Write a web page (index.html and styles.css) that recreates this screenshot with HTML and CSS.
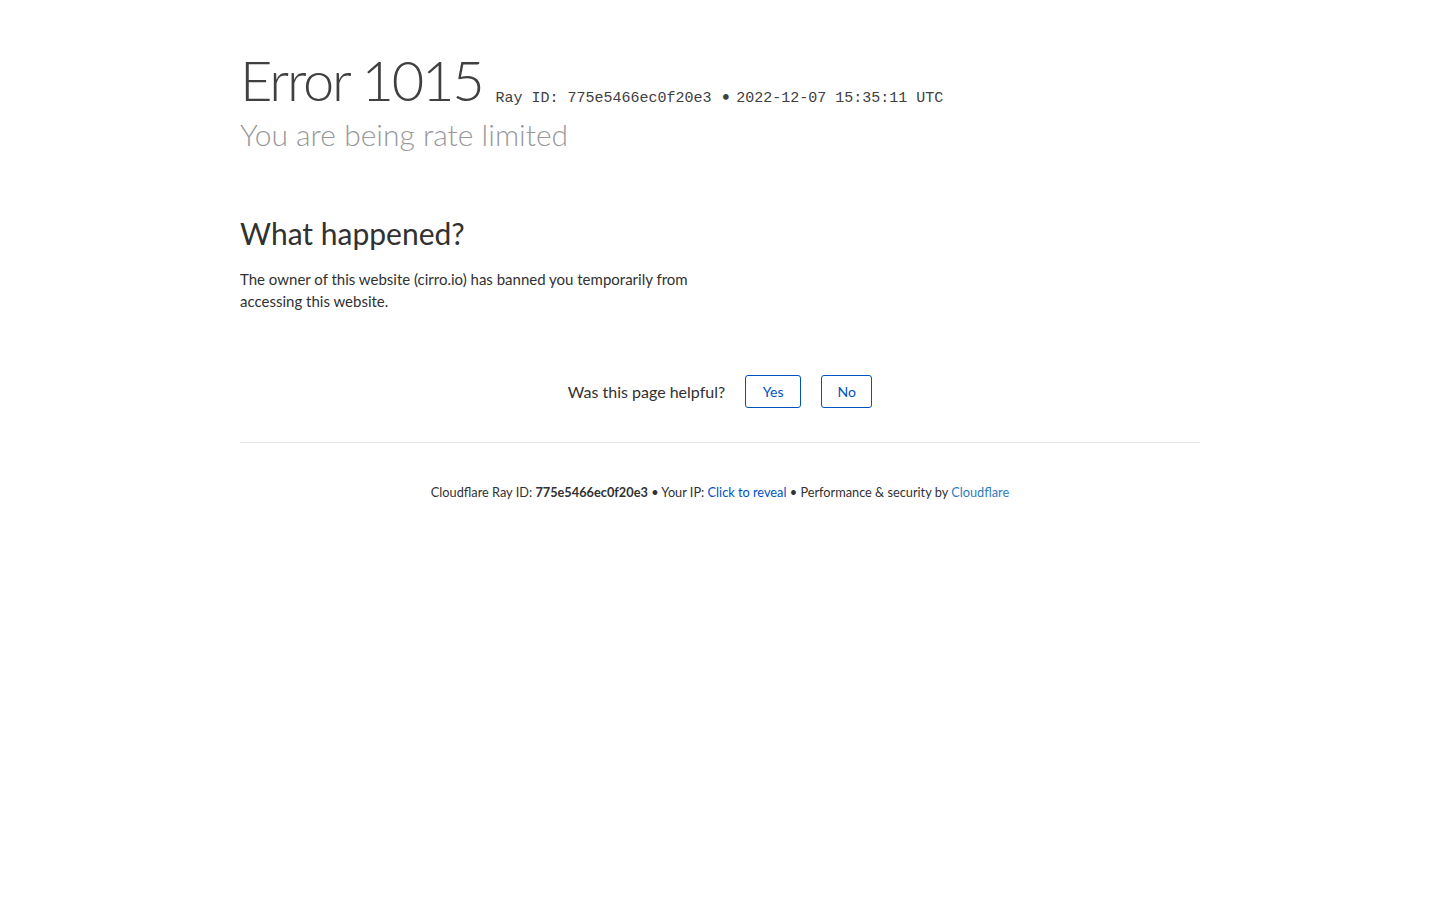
FILE: index.html
```html
<!DOCTYPE html>
<html lang="en">
<head>
<meta charset="utf-8">
<title>Access denied | cirro.io used Cloudflare to restrict access</title>
<link rel="stylesheet" href="styles.css">
</head>
<body>
<div class="wrapper">
  <header class="header">
    <h1 class="title"><span>Error</span> <span>1015</span> <small class="ray">Ray ID: 775e5466ec0f20e3<span class="ray-sep">&bull;</span>2022-12-07 15:35:11 UTC</small></h1>
    <h2 class="subtitle">You are being rate limited</h2>
  </header>
  <section class="section">
    <h2 class="section-title">What happened?</h2>
    <p class="text">The owner of this website (cirro.io) has banned you temporarily from accessing this website.</p>
  </section>
  <div class="feedback">
    <span class="feedback-q">Was this page helpful?</span>
    <button class="btn btn-yes" type="button">Yes</button>
    <button class="btn btn-no" type="button">No</button>
  </div>
  <footer class="footer">
    <span>Cloudflare Ray ID: <strong>775e5466ec0f20e3</strong></span>
    <span class="sep">&bull;</span>
    <span>Your IP: <a class="link-blue" href="#">Click to reveal</a></span>
    <span class="sep">&bull;</span>
    <span>Performance &amp; security by <a class="link-cf" href="#">Cloudflare</a></span>
  </footer>
</div>
</body>
</html>
```
FILE: styles.css
```css
html, body {
  margin: 0;
  padding: 0;
  background: #fff;
}
body {
  font-family: Lato, "Noto Sans", sans-serif;
  color: #404040;
}
.wrapper {
  width: 960px;
  margin: 0 auto;
}
.header {
  padding-top: 44px;
}
.title {
  margin: 0;
  font-size: 56px;
  font-weight: 300;
  line-height: 72px;
  letter-spacing: -2.2px;
  color: #404040;
  white-space: nowrap;
}
.ray {
  font-family: "Liberation Mono", monospace;
  font-size: 15px;
  font-weight: 400;
  line-height: 1;
  letter-spacing: 0;
  color: #404040;
  vertical-align: -1px;
}
.ray-sep {
  font-family: Lato, sans-serif;
  margin: 0 6px 0 10px;
}
.subtitle {
  margin: 0;
  font-size: 30px;
  font-weight: 300;
  line-height: 36px;
  color: #999;
}
.section {
  margin-top: 61px;
}
.section-title {
  margin: 0;
  font-size: 30px;
  font-weight: 400;
  line-height: 40px;
  color: #313131;
}
.text {
  margin: 15px 0 0;
  width: 470px;
  font-size: 15px;
  line-height: 22px;
  color: #313131;
}
.feedback {
  margin-top: 63px;
  display: flex;
  justify-content: center;
  align-items: center;
  gap: 20px;
  padding-bottom: 34px;
  border-bottom: 1px solid #e5e5e5;
}
.feedback-q {
  font-size: 16px;
  color: #313131;
}
.btn {
  font-family: Lato, "Noto Sans", sans-serif;
  font-size: 14px;
  color: #0051c3;
  background: #fff;
  border: 1px solid #0051c3;
  border-radius: 3px;
  height: 33px;
  padding: 0;
  cursor: pointer;
}
.btn-yes {
  width: 56px;
}
.btn-no {
  width: 51px;
}
.footer {
  margin-top: 39px;
  text-align: center;
  font-size: 12.75px;
  line-height: 20px;
  color: #313131;
}
.footer strong {
  font-weight: 700;
}
.sep {
  margin: 0;
}
.link-blue {
  color: #0051c3;
  text-decoration: none;
}
.link-cf {
  color: #2f7bbf;
  text-decoration: none;
}
```
